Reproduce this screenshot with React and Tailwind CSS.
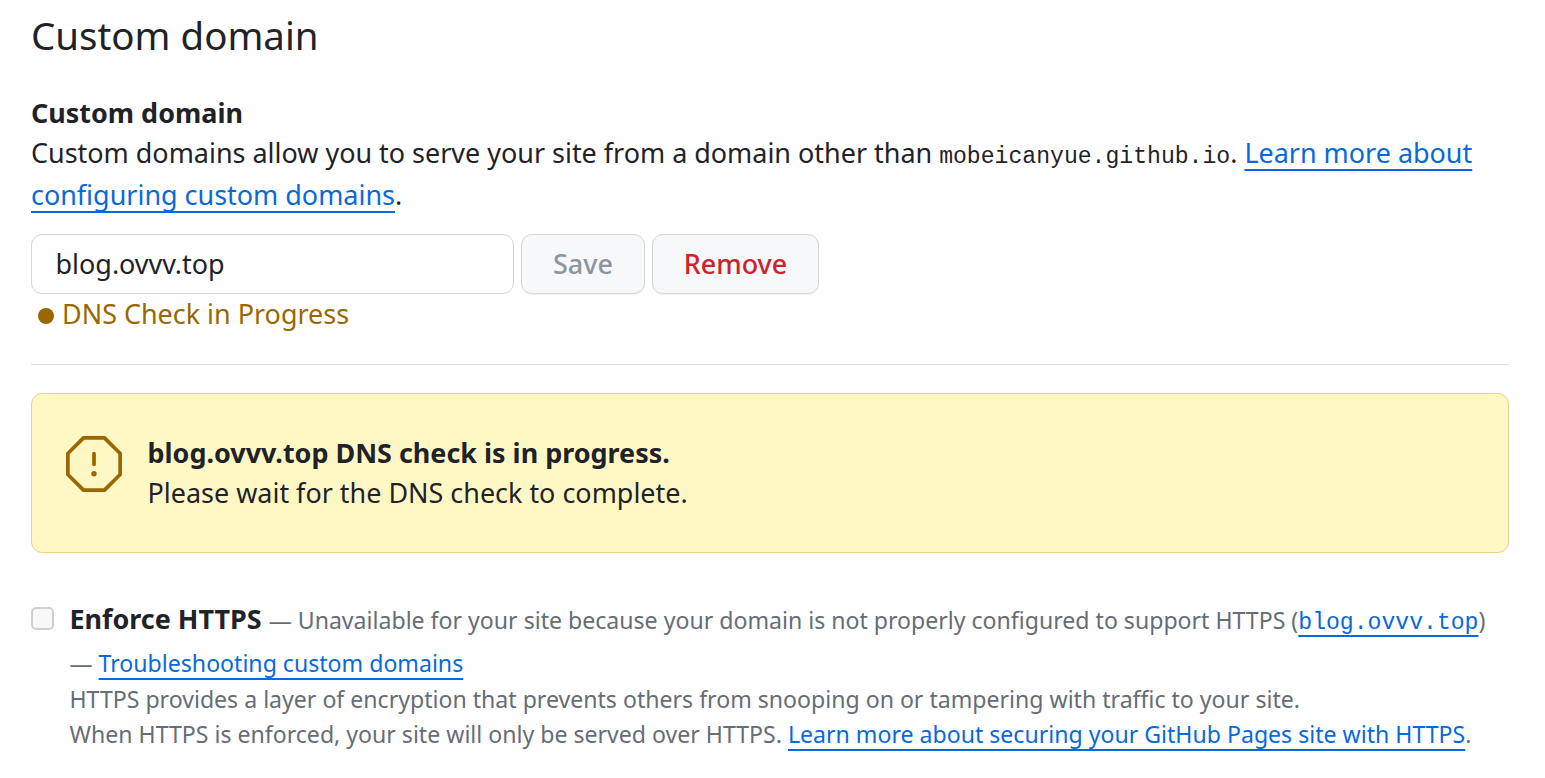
import React from "react";

const Link = ({ children, className = "" }) => (
  <a href="#" className={`text-[#0969da] underline decoration-2 underline-offset-[6px] ${className}`}>{children}</a>
);

export default function App() {
  return (
    <main className="h-[778px] overflow-hidden bg-white pl-[31px] pr-9 font-['Noto_Sans',sans-serif] text-[26.95px] text-[#1f2328]">
      <h2 className="pt-[5px] text-[38.45px] leading-[60px]">Custom domain</h2>
      <section className="pt-7">
        <h3 className="font-bold leading-[40px]">Custom domain</h3>
        <p className="-mt-px whitespace-nowrap leading-[42px]">
          Custom domains allow you to serve your site from a domain other than{" "}
          <span className="font-['Liberation_Mono',monospace] text-[23.1px] leading-none">mobeicanyue.github.io</span>. <Link>Learn more about</Link>
          <br />
          <Link>configuring custom domains</Link>.
        </p>
        <div className="mt-[18px] flex gap-[7px]">
          <div className="flex h-[60px] w-[483px] items-center rounded-[11px] border border-[#d5d8da] px-[23.5px] shadow-[inset_0_1px_0_rgba(208,215,222,0.2)]">blog.ovvv.top</div>
          <button className="h-[60px] w-[124px] rounded-[11px] border border-[#d5d8da] bg-[#f6f8fa] font-medium text-[#8c959f] shadow-[0_1px_1px_rgba(31,35,40,0.06)]">Save</button>
          <button className="h-[60px] w-[167px] rounded-[11px] border border-[#d5d8da] bg-[#f6f8fa] font-medium text-[#cf222e] shadow-[0_1px_1px_rgba(31,35,40,0.06)]">Remove</button>
        </div>
        <div className="flex h-[40px] items-center gap-2 pl-[7px] text-[#9a6700]">
          <span className="mt-1 size-4 rounded-full bg-[#9a6700]" />
          DNS Check in Progress
        </div>
      </section>
      <hr className="mt-[30px] border-[#d8dee4]" />
      <section className="mt-7 flex h-[160px] items-center rounded-[11px] border border-[#e5d58a] bg-[#fff8c5] pl-[34px]">
        <svg className="-mt-[18px] size-[56px] text-[#9a6700]" viewBox="0 0 24 24" fill="none" stroke="currentColor" strokeWidth="1.6">
          <path d="M7.5.8h9l6.7 6.7v9l-6.7 6.7h-9L.8 16.5v-9z" strokeLinejoin="round" />
          <path d="M12 7.5v4.65" strokeLinecap="round" />
          <circle cx="12" cy="16.2" r="1.15" fill="currentColor" stroke="none" />
        </svg>
        <div className="ml-[25.5px] leading-[40px]">
          <p className="font-bold">blog.ovvv.top DNS check is in progress.</p>
          <p>Please wait for the DNS check to complete.</p>
        </div>
      </section>
      <section className="mt-[46px] flex whitespace-nowrap">
        <span className="mt-2 size-[23px] shrink-0 rounded-[5px] border-2 border-[#cfcfcf] bg-[#f8f8f8]" />
        <div className="ml-[15.5px] text-[23.1px] text-[#656d76]">
          <p className="leading-[43px]">
            <strong className="text-[26.95px] leading-none text-[#1f2328]">Enforce HTTPS </strong>— Unavailable for your site because your domain is not properly configured to support HTTPS (<Link className="font-['Liberation_Mono',monospace] leading-none">blog.ovvv.top</Link>)
            <br />— <Link className="[text-decoration-skip-ink:none]">Troubleshooting custom domains</Link>
          </p>
          <p className="-mt-[3px] leading-[35px]">
            HTTPS provides a layer of encryption that prevents others from snooping on or tampering with traffic to your site.
            <br />
            When HTTPS is enforced, your site will only be served over HTTPS. <Link className="[text-decoration-skip-ink:none]">Learn more about securing your GitHub Pages site with HTTPS</Link>.
          </p>
        </div>
      </section>
    </main>
  );
}
